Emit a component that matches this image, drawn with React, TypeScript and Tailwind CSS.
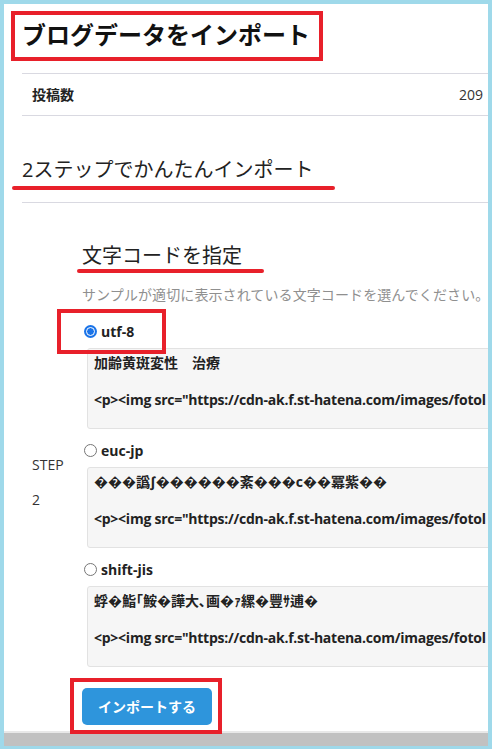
import React from "react";

const FONT = "font-['Open_Sans','Noto_Sans_CJK_JP',sans-serif]";

function Radio({ checked }: { checked?: boolean }) {
  if (checked) {
    return (
      <span className="flex h-[13px] w-[13px] shrink-0 items-center justify-center rounded-full bg-[#1a73e8]">
        <span className="h-[9px] w-[9px] rounded-full border-[1.5px] border-white bg-[#1a73e8]" />
      </span>
    );
  }
  return <span className="h-[13px] w-[13px] shrink-0 rounded-full border border-[#767676] bg-white" />;
}

function Sample({ first }: { first: string }) {
  return (
    <div className="ml-[5px] mt-[7px] h-[81px] w-[600px] shrink-0 overflow-hidden whitespace-nowrap rounded-[3px] border border-[#e2e2e2] bg-[#f6f6f6] px-[6px] pt-[5px] text-[14px] font-bold leading-[18.5px] text-[#222]">
      <div>{first}</div>
      <div>&nbsp;</div>
      <div className="tracking-[-0.25px]">{'<p><img src="https://cdn-ak.f.st-hatena.com/images/fotol'}</div>
    </div>
  );
}

function Option({ label, checked, first }: { label: string; checked?: boolean; first: string }) {
  return (
    <div className="flex flex-col">
      <div className="ml-[2px] flex h-[20px] items-center gap-[4px]">
        <Radio checked={checked} />
        <span className="text-[14px] font-bold text-[#222]">{label}</span>
      </div>
      <Sample first={first} />
    </div>
  );
}

export default function App() {
  return (
    <div className={`h-[749px] w-[492px] bg-[#9fd9ea] pb-[3px] pl-[4px] pr-[4px] pt-[4px] ${FONT}`}>
      <div className="relative flex h-full w-full flex-col overflow-hidden bg-white text-[#222]">
        <h1 className="pl-[18px] pt-[15px] text-[24px] font-bold leading-[32px] text-[#111] whitespace-nowrap">
          ブログデータをインポート
        </h1>

        <div className="ml-[18px] mt-[22px] flex h-[43px] items-center justify-between border-y border-[#d9d9e1] pl-[10px] pr-[5px] text-[14px]">
          <span className="font-semibold">投稿数</span>
          <span className="text-[#333]">209</span>
        </div>

        <h2 className="mt-[40px] pl-[18px] text-[20px] font-normal leading-[28px] whitespace-nowrap">
          2ステップでかんたんインポート
        </h2>
        <div className="ml-[18px] mt-[18px] border-t border-[#d9d9e1]" />

        <div className="ml-[18px] flex">
          <div className="flex w-[60px] shrink-0 flex-col pl-[10px] pt-[252px] text-[14px] leading-[20px] text-[#333]">
            <span>STEP</span>
            <span className="mt-[15px]">2</span>
          </div>
          <div className="flex min-w-0 flex-col">
            <h3 className="pt-[39px] text-[20px] font-normal leading-[28px] whitespace-nowrap">文字コードを指定</h3>
            <p className="mt-[15px] text-[14px] leading-[20px] tracking-[0.1px] text-[#8f8f8f] whitespace-nowrap">
              サンプルが適切に表示されている文字コードを選んでください。
            </p>
            <div className="mt-[16px] flex flex-col gap-[11px]">
              <Option label="utf-8" checked first="加齢黄斑変性　治療" />
              <Option label="euc-jp" first="���譌∫������紊���c��冪紫��" />
              <Option label="shift-jis" first="蜉�鮨｢鮟�譁大､画�ｧ縲�豐ｻ逋�" />
            </div>
            <button className="mt-[21px] flex h-[37px] w-[130px] items-center justify-center rounded-[5px] bg-[#2e95dc] text-[14px] font-bold text-white">
              インポートする
            </button>
          </div>
        </div>

        <div className="mt-auto h-[15px] border-t-2 border-[#e8e8e8] bg-[#c1c1c1]" />

        {/* annotations */}
        <div className="pointer-events-none absolute left-[7px] top-[7px] h-[50px] w-[312px] border-4 border-[#e8202a]" />
        <div className="pointer-events-none absolute left-[8px] top-[182px] h-[4px] w-[323px] rounded-full bg-[#e8202a]" />
        <div className="pointer-events-none absolute left-[73px] top-[265px] h-[4px] w-[187px] rounded-full bg-[#e8202a]" />
        <div className="pointer-events-none absolute left-[53px] top-[305px] h-[45px] w-[109px] border-4 border-[#e8202a]" />
        <div className="pointer-events-none absolute left-[66px] top-[674px] h-[56px] w-[152px] border-4 border-[#e8202a]" />
      </div>
    </div>
  );
}
